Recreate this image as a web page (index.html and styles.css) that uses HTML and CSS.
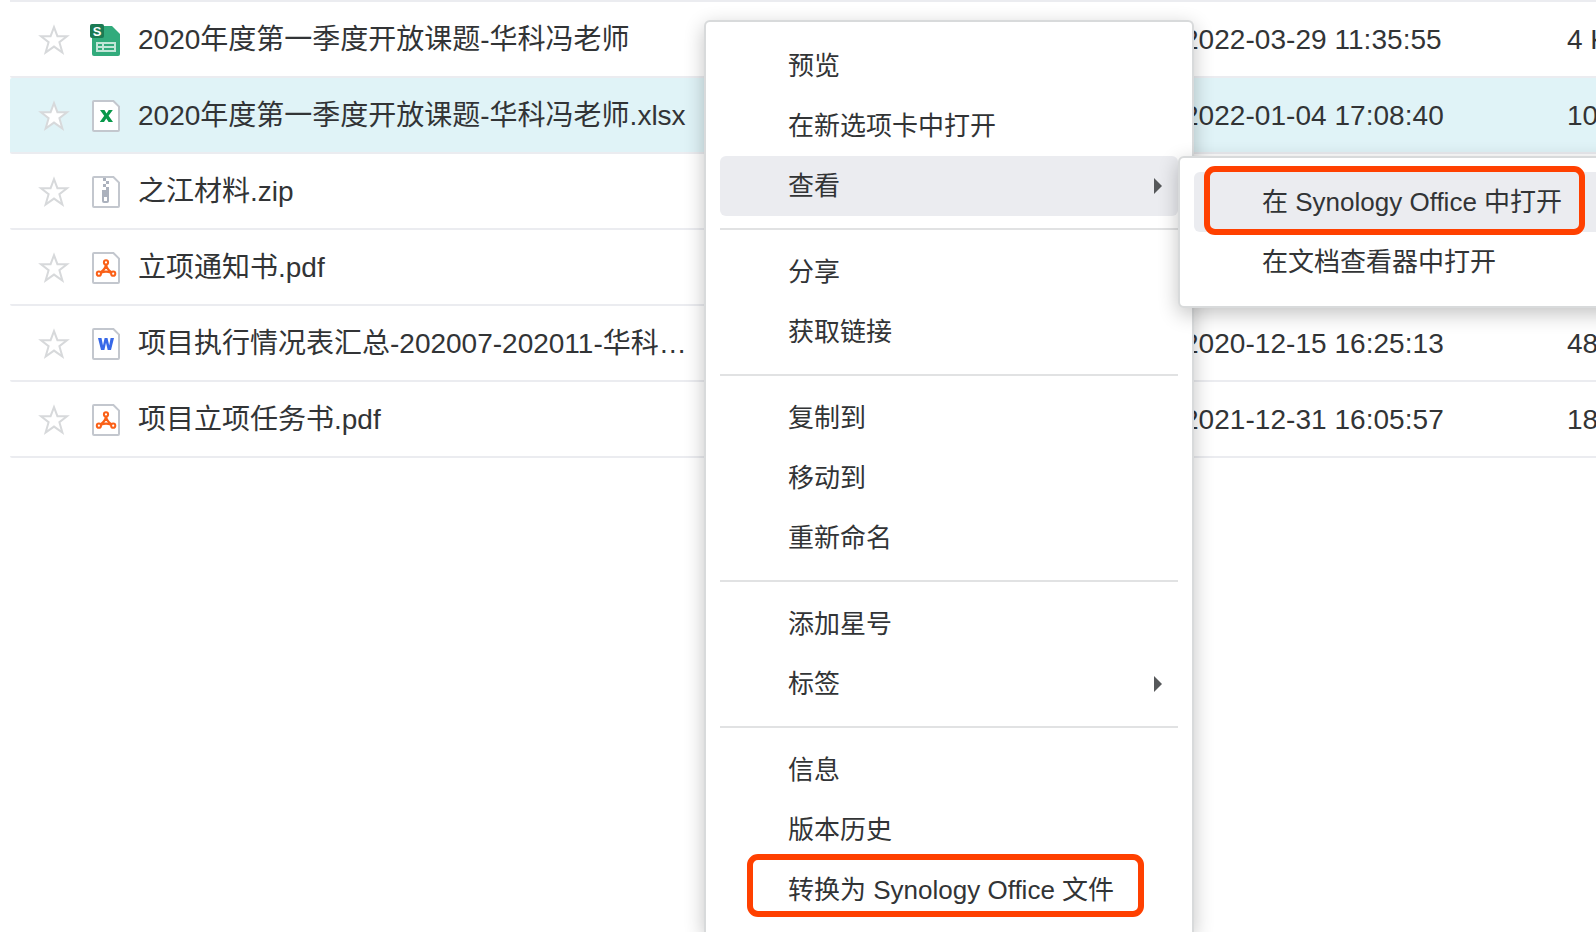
FILE: index.html
```html
<!DOCTYPE html>
<html lang="zh-CN">
<head>
<meta charset="utf-8">
<title>Synology Drive</title>
<link rel="stylesheet" href="styles.css">
</head>
<body>
<svg class="defs" aria-hidden="true">
  <symbol id="star" viewBox="0 0 32 32">
    <path class="star-shape" d="M16 3.2 L19.4 12.2 L29 12.2 L21.4 18.2 L24.4 28.6 L16 22.6 L7.6 28.6 L10.6 18.2 L3 12.2 L12.6 12.2 Z"/>
  </symbol>
  <symbol id="page" viewBox="0 0 30 32">
    <path d="M4 1 H23.4 L29 6.6 V30 Q29 31 28 31 H4 Q3 31 3 30 V2 Q3 1 4 1 Z" fill="#fff" stroke="#c3c7ce" stroke-width="2"/>
  </symbol>
  <symbol id="sheet" viewBox="0 0 30 32">
    <path d="M4 2 H22 L30 10 V30 Q30 32 28 32 H4 Q2 32 2 30 V4 Z" fill="#32ab7c"/>
    <path d="M7 19 H25 V27 H7 Z M7 23 H25 M13 19 V27" fill="none" stroke="#c2e6d8" stroke-width="2"/>
    <rect width="14" height="14" rx="2" fill="#1b7a53"/>
    <text x="7" y="11.7" class="badge">S</text>
  </symbol>
  <symbol id="xls" viewBox="0 0 30 32">
    <use href="#page"/>
    <path d="M10 10 H14.5 L16.5 13.4 L18.7 10 H22.8 L18.6 15.8 L23 22 H18.6 L16.3 18.4 L14 22 H9.8 L14.2 15.8 Z" fill="#08984a"/>
  </symbol>
  <symbol id="zip" viewBox="0 0 30 32">
    <use href="#page"/>
    <path d="M13 2h3v3h-3z M16 5h3v3h-3z M13 8h3v3h-3z M16 11h3v3h-3z M12 14h7v11q0 2-2 2h-3q-2 0-2-2z M14 21v4h3v-4z" fill="#abb1bd" fill-rule="evenodd"/>
  </symbol>
  <symbol id="pdf" viewBox="0 0 30 32">
    <use href="#page"/>
    <path d="M16 12.6 C15.8 16 13.3 18.3 11 20.2 M16 12.6 C16.5 16 18.7 18.3 21.2 20.2 M11 20.7 Q16 18.5 21 20.7" fill="none" stroke="#fa6017" stroke-width="2.2"/>
    <g fill="#fff" stroke="#fa6017" stroke-width="2"><circle cx="16" cy="10.4" r="2.1"/><circle cx="8.9" cy="21.7" r="2.1"/><circle cx="23.2" cy="21.7" r="2.1"/></g>
  </symbol>
  <symbol id="doc" viewBox="0 0 30 32">
    <use href="#page"/>
    <path d="M8 10 H11.5 L13 17.6 L14.6 10 H17.5 L19.2 17.6 L20.6 10 H24 L21 22 H17.7 L16 14.8 L14.4 22 H11 Z" fill="#3768e8"/>
  </symbol>
</svg>

<main class="files">
  <div class="row">
    <svg class="star"><use href="#star"/></svg><svg class="icon"><use href="#sheet"/></svg>
    <span class="name">2020年度第一季度开放课题-华科冯老师</span><span class="date">2022-03-29 11:35:55</span><span class="size">4 KB</span>
  </div>
  <div class="row selected">
    <svg class="star"><use href="#star"/></svg><svg class="icon"><use href="#xls"/></svg>
    <span class="name">2020年度第一季度开放课题-华科冯老师.xlsx</span><span class="date">2022-01-04 17:08:40</span><span class="size">10</span>
  </div>
  <div class="row">
    <svg class="star"><use href="#star"/></svg><svg class="icon"><use href="#zip"/></svg>
    <span class="name">之江材料.zip</span>
  </div>
  <div class="row">
    <svg class="star"><use href="#star"/></svg><svg class="icon"><use href="#pdf"/></svg>
    <span class="name">立项通知书.pdf</span>
  </div>
  <div class="row">
    <svg class="star"><use href="#star"/></svg><svg class="icon"><use href="#doc"/></svg>
    <span class="name">项目执行情况表汇总-202007-202011-华科…</span><span class="date">2020-12-15 16:25:13</span><span class="size">48</span>
  </div>
  <div class="row">
    <svg class="star"><use href="#star"/></svg><svg class="icon"><use href="#pdf"/></svg>
    <span class="name">项目立项任务书.pdf</span><span class="date">2021-12-31 16:05:57</span><span class="size">18</span>
  </div>
</main>

<nav class="menu context-menu">
  <div class="item">预览</div>
  <div class="item">在新选项卡中打开</div>
  <div class="item active">查看<i class="arrow"></i></div>
  <hr class="separator">
  <div class="item">分享</div>
  <div class="item">获取链接</div>
  <hr class="separator">
  <div class="item">复制到</div>
  <div class="item">移动到</div>
  <div class="item">重新命名</div>
  <hr class="separator">
  <div class="item">添加星号</div>
  <div class="item">标签<i class="arrow"></i></div>
  <hr class="separator">
  <div class="item">信息</div>
  <div class="item">版本历史</div>
  <div class="item">转换为 Synology Office 文件</div>
</nav>

<nav class="menu submenu">
  <div class="item active">在 Synology Office 中打开</div>
  <div class="item">在文档查看器中打开</div>
</nav>

<div class="highlight highlight-open"></div>
<div class="highlight highlight-convert"></div>
</body>
</html>
```
FILE: styles.css
```css
* { box-sizing: border-box; }

body {
  position: relative;
  width: 1596px;
  height: 932px;
  margin: 0;
  overflow: hidden;
  background: #fff;
  color: #323436;
  font-family: "Liberation Sans", "Noto Sans CJK SC", sans-serif;
}

.defs { position: absolute; width: 0; height: 0; }

.files {
  margin-left: 10px;
  border-top: 2px solid #ebecf0;
}

.row {
  display: flex;
  align-items: center;
  height: 76px;
  padding-left: 28px;
  border-bottom: 2px solid #ebecf0;
  border-radius: 2px 0 0 2px;
  font-size: 28px;
  line-height: 40px;
  white-space: nowrap;
}

.row.selected { background: #e0f3f7; }

.star { flex: none; width: 32px; height: 32px; margin: 2px 20px 0 0; }
.star-shape { fill: #fff; stroke: #d7d9db; stroke-width: 2; }
.icon { flex: none; width: 30px; height: 32px; margin: 2px 18px 0 0; }

.badge {
  fill: #fff;
  font: bold 13px "Liberation Sans", sans-serif;
  text-anchor: middle;
}

.name, .date, .size { flex: none; padding-top: 2px; }
.name { width: 1045px; }
.date { width: 384px; letter-spacing: 0.04px; }

.menu {
  position: absolute;
  padding: 14px;
  border: 2px solid #d8dadb;
  border-radius: 6px;
  background: #fff;
  box-shadow: 0 6px 20px rgba(0, 0, 0, 0.24);
  font-size: 26px;
}

.context-menu {
  left: 704px;
  top: 20px;
  width: 490px;
  height: 912px;
  padding-bottom: 0;
  border-bottom: 0;
  border-radius: 6px 6px 0 0;
}

.submenu { left: 1178px; top: 156px; width: 490px; height: 152px; }

.item {
  display: flex;
  align-items: center;
  justify-content: space-between;
  height: 60px;
  padding: 0 16px 0 68px;
  border-radius: 6px;
  line-height: 40px;
  white-space: nowrap;
}

.item.active { background: #ebecf0; }

.separator {
  height: 2px;
  margin: 12px 0;
  border: 0;
  background: #e1e2e3;
}

.arrow {
  border-left: 8px solid #56585a;
  border-top: 8px solid transparent;
  border-bottom: 8px solid transparent;
}

.highlight {
  position: absolute;
  border: 6px solid #ff4000;
  border-radius: 11px;
}

.highlight-open { left: 1204px; top: 166px; width: 380.5px; height: 69px; }
.highlight-convert { left: 747px; top: 854px; width: 396.5px; height: 63px; }
```
